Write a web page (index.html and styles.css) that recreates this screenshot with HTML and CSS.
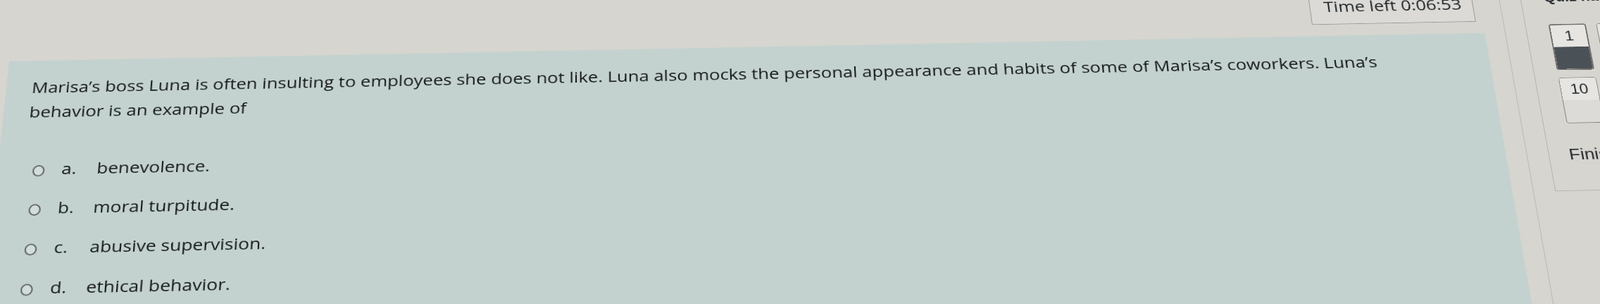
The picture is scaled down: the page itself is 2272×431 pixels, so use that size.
FILE: index.html
```html
<!DOCTYPE html>
<html lang="en">
<head>
<meta charset="utf-8">
<title>Quiz</title>
<link rel="stylesheet" href="styles.css">
</head>
<body>
<div class="stage">
  <div class="page">
    <main class="main">
      <div class="timer-row">
        <div class="timer">Time left 0:06:53</div>
      </div>
      <section class="que">
        <div class="qtext">Marisa’s boss Luna is often insulting to employees she does not like. Luna also mocks the personal appearance and habits of some of Marisa’s coworkers. Luna’s behavior is an example of</div>
        <div class="answers">
          <div class="opt"><span class="radio"></span><span class="num">a.</span><span class="atext">benevolence.</span></div>
          <div class="opt"><span class="radio"></span><span class="num">b.</span><span class="atext">moral turpitude.</span></div>
          <div class="opt"><span class="radio"></span><span class="num">c.</span><span class="atext">abusive supervision.</span></div>
          <div class="opt"><span class="radio"></span><span class="num">d.</span><span class="atext">ethical behavior.</span></div>
        </div>
      </section>
    </main>
    <aside class="drawer">
      <div class="navcard">
        <div class="navtitle">Quiz navigation</div>
        <div class="navgrid">
          <div class="qbtn current answered"><span class="qn">1</span><span class="qstate"></span></div>
          <div class="qbtn"><span class="qn">2</span><span class="qstate"></span></div>
          <div class="qbtn"><span class="qn">3</span><span class="qstate"></span></div>
          <div class="qbtn"><span class="qn">10</span><span class="qstate"></span></div>
          <div class="qbtn"><span class="qn">11</span><span class="qstate"></span></div>
          <div class="qbtn"><span class="qn">12</span><span class="qstate"></span></div>
        </div>
        <div class="finish">Finish attempt ...</div>
      </div>
    </aside>
  </div>
</div>
</body>
</html>
```
FILE: styles.css
```css
html {
  background: #d6d5d0;
}
body {
  margin: 0;
  width: 2272px;
  height: 431px;
  overflow: hidden;
  font-family: "Open Sans", "Noto Sans", sans-serif;
  color: #16191b;
}
/* the reference is a photo of a screen: tilt, keystone and squash */
.stage {
  width: 2460px;
  height: 640px;
  transform-origin: 963px 215px;
  transform: rotate(-1.1deg) perspective(1000px) rotateX(7.5deg) scaleY(0.85);
}
.page {
  display: flex;
  align-items: flex-start;
  margin-left: -3px;
}
.main {
  width: 2137px;
  flex: none;
}
.timer-row {
  display: flex;
  justify-content: flex-end;
  padding-right: 10px;
  margin-top: -41px;
  margin-bottom: 20px;
}
.timer {
  font-size: 26px;
  line-height: 34px;
  padding: 10px 16px 14px 20px;
  border: 1px solid #9c9892;
  border-top: none;
  background: #dbdad6;
  color: #222629;
}
.que {
  background: #c3d2ce;
  min-height: 640px;
  padding: 25px 74px 0 37px;
}
.qtext {
  font-size: 26px;
  line-height: 42px;
}
.answers {
  margin-top: 44px;
  margin-left: 13px;
}
.opt {
  font-size: 26px;
  line-height: 65px;
  display: flex;
  align-items: baseline;
}
.radio {
  display: inline-block;
  width: 13px;
  height: 15px;
  border: 2px solid #5f6466;
  border-radius: 50%;
  background: #d3dedb;
  align-self: center;
  margin-top: 6px;
  flex: none;
}
.num {
  width: 50px;
  margin-left: 24px;
  flex: none;
}
.drawer {
  flex: none;
  width: 320px;
  height: 700px;
  margin-left: 29px;
  margin-top: -150px;
  border-left: 1px solid #bab8b3;
  padding-left: 30px;
}
.navcard {
  border-left: 1px solid #b5b3ae;
  border-bottom: 1px solid #b5b3ae;
  height: 458px;
  padding-left: 33px;
  font-family: "Liberation Sans", Arial, sans-serif;
  color: #25292c;
}
.navtitle {
  font-size: 22px;
  line-height: 26px;
  padding-top: 115px;
  font-weight: bold;
}
.navgrid {
  display: grid;
  grid-template-columns: repeat(3, 54px);
  column-gap: 15px;
  row-gap: 13px;
  margin-top: 34px;
}
.qbtn {
  height: 76px;
  border: 1px solid #85827e;
  border-radius: 4px;
  background: #dcdbd7;
  display: flex;
  flex-direction: column;
  overflow: hidden;
}
.qn {
  height: 38px;
  font-size: 23px;
  line-height: 38px;
  text-align: center;
  background: #e6e5e1;
}
.qstate {
  flex: 1;
}
.current {
  border: 2px solid #6f6d6a;
}
.answered .qstate {
  background: #4b5257;
}
.finish {
  font-size: 26px;
  line-height: 32px;
  margin-top: 36px;
  margin-left: -5px;
}
```
